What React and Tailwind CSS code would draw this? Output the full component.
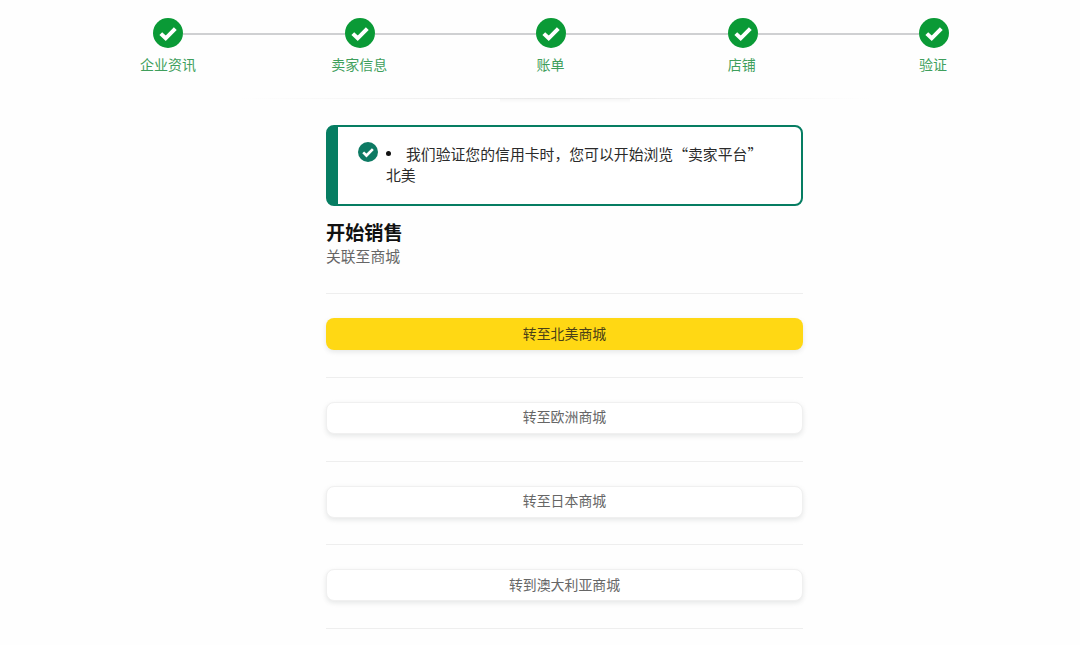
import React from 'react';

const STEPS = ['企业资讯', '卖家信息', '账单', '店铺', '验证'];
const STORES = ['转至欧洲商城', '转至日本商城', '转到澳大利亚商城'];

const CheckCircle = ({ className, fill, strokeWidth = 4 }) => (
  <svg viewBox="0 0 30 30" className={className}>
    <circle cx="15" cy="15" r="15" fill={fill} />
    <path d="M7.8 15.6l4.9 4.7 9.6-9.6" fill="none" stroke="#fff" strokeWidth={strokeWidth} strokeLinejoin="miter" />
  </svg>
);

const Stepper = () => (
  <div className="h-[98px] pt-[18px]">
    <div className="ml-[153px] flex w-[796px] items-center">
      {STEPS.map((step, i) => (
        <React.Fragment key={step}>
          <CheckCircle className="h-[30px] w-[30px] shrink-0" fill="#0a9a36" />
          {i < STEPS.length - 1 && <div className="mt-[1px] h-[2px] flex-1 bg-[#cfd0d2]" />}
        </React.Fragment>
      ))}
    </div>
    <div className="ml-[153px] mt-[5px] flex w-[795px] justify-between">
      {STEPS.map((step) => (
        <div key={step} className="flex w-[30px] justify-center whitespace-nowrap text-[14px] leading-[22px] text-[#3f9f5c]">
          {step}
        </div>
      ))}
    </div>
  </div>
);

const App = () => {
  return (
    <div className="h-[645px] w-[1080px] overflow-hidden bg-[#fefefe] font-['Noto_Sans_CJK_SC','Noto_Sans',sans-serif]">
      <Stepper />
      <div className="ml-[240px] h-px w-[630px] bg-gradient-to-r from-transparent via-[#e8e8e8] to-transparent" />
      <div className="ml-[500px] h-[4px] w-[130px] bg-gradient-to-b from-[#f6f6f6] to-transparent" />

      <div className="ml-[326px] mt-[22px] w-[477px]">
        {/* Alert */}
        <div className="flex h-[81px] rounded-lg border-2 border-l-[12px] border-[#067d62] bg-white pl-[20px] pt-[15px]">
          <CheckCircle className="h-[20px] w-[20px] shrink-0" fill="#0d7a63" />
          <div className="ml-[8px] pt-[1px] text-[14.85px] leading-[21px] text-[#2b2b2b]">
            <div className="flex">
              <span className="mt-[8px] mr-[15px] h-[5px] w-[5px] shrink-0 rounded-full bg-[#111]" />
              <span>我们验证您的信用卡时，您可以开始浏览“卖家平台”</span>
            </div>
            <div>北美</div>
          </div>
        </div>

        <h1 className="mt-[14px] text-[19.2px] font-bold leading-[25px] text-[#111]">开始销售</h1>
        <p className="text-[14.8px] leading-[22px] text-[#666]">关联至商城</p>

        <div className="mt-[26px] h-px bg-[#eeeeee]" />

        <button type="button" className="mt-[24px] block h-[32px] w-full rounded-lg bg-[#ffd814] pb-[2px] text-[13.9px] text-[#4a4018] shadow-[0_2px_5px_rgba(213,217,217,0.6)]">
          转至北美商城
        </button>

        {STORES.map((store) => (
          <div key={store}>
            <div className="mt-[26.8px] h-px bg-[#eeeeee]" />
            <button type="button" className="mt-[24px] block h-[32px] w-full rounded-lg border border-[#f0f0f0] bg-white pb-[2px] text-[13.9px] text-[#666] shadow-[0_2px_5px_rgba(213,217,217,0.6)]">
              {store}
            </button>
          </div>
        ))}

        <div className="mt-[26.8px] h-px bg-[#eeeeee]" />
      </div>
    </div>
  );
};

export default App;
